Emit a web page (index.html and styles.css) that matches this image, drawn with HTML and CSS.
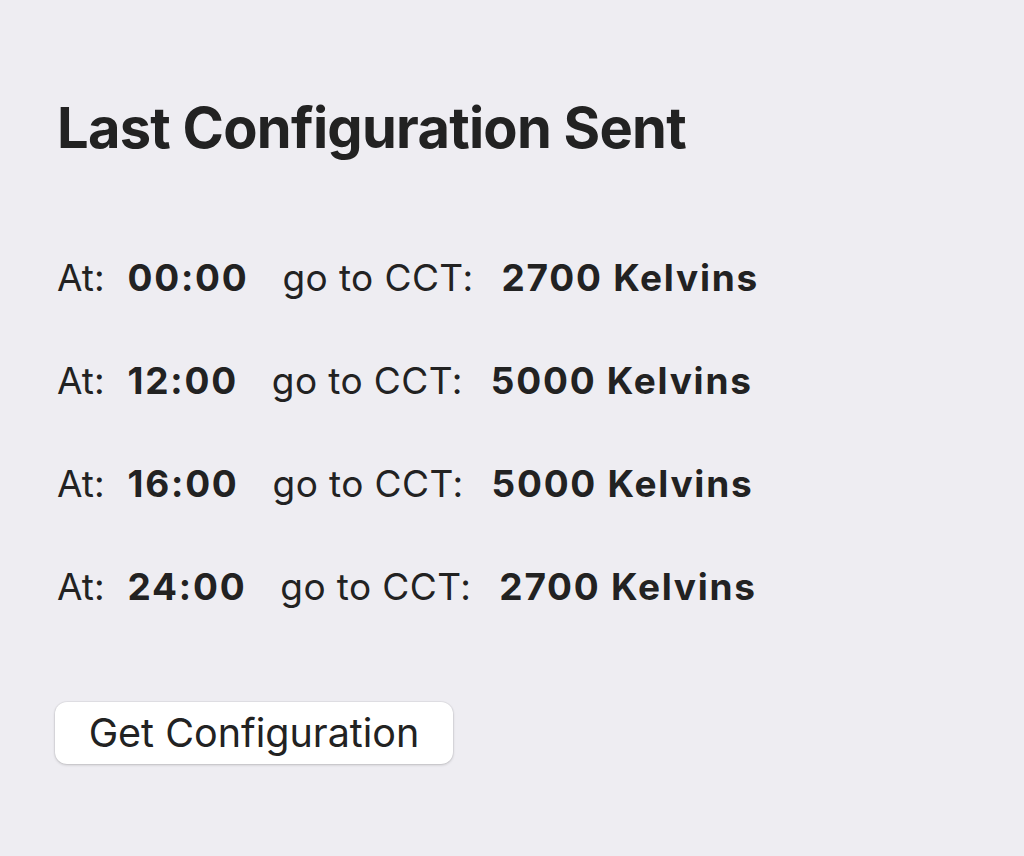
FILE: index.html
```html
<!DOCTYPE html>
<html>
<head>
<meta charset="utf-8">
<link rel="stylesheet" href="styles.css">
</head>
<body>
<div class="panel">
  <h1 class="title">Last Configuration Sent</h1>
  <div class="rows">
    <div class="row"><span class="lbl">At:</span><b class="time">00:00</b><span class="lbl2">go to CCT:</span><b class="val">2700 Kelvins</b></div>
    <div class="row"><span class="lbl">At:</span><b class="time">12:00</b><span class="lbl2">go to CCT:</span><b class="val">5000 Kelvins</b></div>
    <div class="row"><span class="lbl">At:</span><b class="time">16:00</b><span class="lbl2">go to CCT:</span><b class="val">5000 Kelvins</b></div>
    <div class="row"><span class="lbl">At:</span><b class="time">24:00</b><span class="lbl2">go to CCT:</span><b class="val">2700 Kelvins</b></div>
  </div>
  <button class="btn">Get Configuration</button>
</div>
</body>
</html>
```
FILE: styles.css
```css
html, body {
  margin: 0;
  padding: 0;
  background: #eeedf2;
  width: 1024px;
  height: 856px;
  overflow: hidden;
}
body {
  font-family: "Inter", "Liberation Sans", sans-serif;
  color: #222222;
}
.panel {
  padding: 96px 0 0 57px;
  display: flex;
  flex-direction: column;
  align-items: flex-start;
}
.title {
  margin: 0;
  font-size: 56px;
  font-weight: 700;
  line-height: 64px;
  letter-spacing: -0.75px;
}
.rows {
  margin-top: 93px;
  display: flex;
  flex-direction: column;
  gap: 53px;
}
.row {
  display: flex;
  align-items: baseline;
  font-size: 37px;
  line-height: 50px;
  white-space: nowrap;
}
.row b {
  font-weight: 700;
  letter-spacing: 1.75px;
}
.lbl2 { letter-spacing: 0.4px; }
.time { margin-left: 23px; }
.lbl2 { margin-left: 34px; }
.val { margin-left: 28px; }
.btn {
  margin-top: 90px;
  margin-left: -2px;
  width: 398px;
  height: 62px;
  background: #ffffff;
  border: none;
  border-radius: 12px;
  box-shadow: 0 1px 3px rgba(0,0,0,0.18), 0 0 0 1px rgba(0,0,0,0.04);
  font-family: "Inter", "Liberation Sans", sans-serif;
  font-size: 39.5px;
  color: #222222;
  padding: 0;
}
```
